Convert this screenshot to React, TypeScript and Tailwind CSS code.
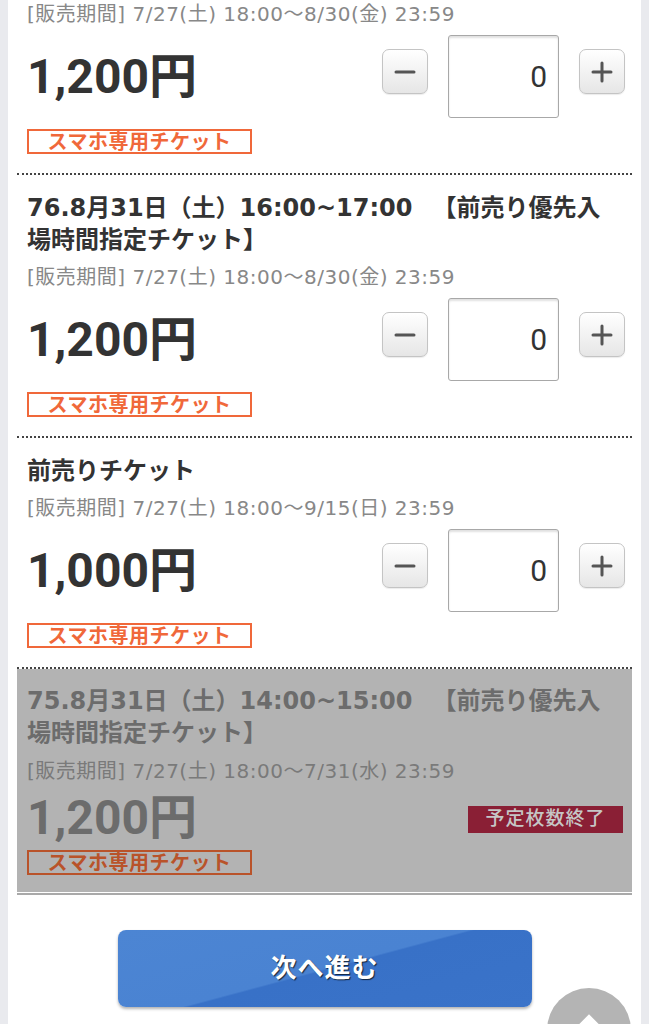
import React from 'react';

type Ticket = {
  title?: string[];
  period: string;
  price: string;
  soldOut?: boolean;
};

// "|" breaks the 　【 pair so the bracket keeps its full width
const tickets: Ticket[] = [
  { period: '[販売期間] 7/27(土) 18:00〜8/30(金) 23:59', price: '1,200円' },
  {
    title: ['76.8月31日（土）16:00~17:00\u3000|【前売り優先入', '場時間指定チケット】'],
    period: '[販売期間] 7/27(土) 18:00〜8/30(金) 23:59',
    price: '1,200円',
  },
  {
    title: ['前売りチケット'],
    period: '[販売期間] 7/27(土) 18:00〜9/15(日) 23:59',
    price: '1,000円',
  },
  {
    title: ['75.8月31日（土）14:00~15:00\u3000|【前売り優先入', '場時間指定チケット】'],
    period: '[販売期間] 7/27(土) 18:00〜7/31(水) 23:59',
    price: '1,200円',
    soldOut: true,
  },
];

const wide = { fontFamily: "'DejaVu Sans', 'Noto Sans CJK JP', sans-serif" };

function StepButton({ kind }: { kind: 'minus' | 'plus' }) {
  return (
    <button className="mt-[14px] flex h-[45px] w-[46px] items-center justify-center rounded-[7px] border border-[#c4c4c4] bg-gradient-to-b from-white to-[#e6e6e6] shadow-[0_1px_1px_rgba(0,0,0,0.08)]">
      <svg width="22" height="22" viewBox="0 0 22 22">
        <path d="M2 11h18" stroke="#555" strokeWidth="3" strokeLinecap="round" />
        {kind === 'plus' && <path d="M11 2v18" stroke="#555" strokeWidth="3" strokeLinecap="round" />}
      </svg>
    </button>
  );
}

function TitleLine({ text }: { text: string }) {
  const parts = text.split('|');
  if (parts.length === 1) return <div>{text}</div>;
  return (
    <div>
      {parts[0]}
      <span className="ml-[-4px] inline-block" />
      {parts[1]}
    </div>
  );
}

function TicketItem({ t, first }: { t: Ticket; first?: boolean }) {
  const dim = t.soldOut;
  return (
    <div
      className={
        dim
          ? 'bg-[#b3b3b3] px-[10px] pt-[16px] pb-[17px]'
          : `border-b-2 border-dotted border-[#444] px-[10px] pb-[19px] ${first ? 'pt-[4px]' : 'pt-[17px]'}`
      }
    >
      {t.title && (
        <div className={`text-[24px] font-bold leading-[32px] ${dim ? 'text-[#6c6c6c]' : 'text-[#333]'}`} style={wide}>
          {t.title.map((l) => (
            <TitleLine key={l} text={l} />
          ))}
        </div>
      )}
      <div
        className={`text-[20px] leading-[20px] tracking-[0.5px] ${t.title ? (dim ? 'mt-[12px]' : 'mt-[11px]') : ''} ${
          dim ? 'text-[#7a7a7a]' : 'text-[#888]'
        }`}
        style={wide}
      >
        {t.period}
      </div>

      {dim ? (
        <div className="mt-[11px] flex h-[52px] items-center justify-between">
          <div className="text-[48px] font-bold leading-none text-[#6c6c6c]">{t.price}</div>
          <div className="mt-[2px] mr-[-1px] flex h-[27px] w-[155px] items-center justify-center bg-[#8a1f35] text-[19px] font-medium tracking-[1px] text-[#c6c6c6]">
            予定枚数終了
          </div>
        </div>
      ) : (
        <div className="mt-[11px] flex items-center justify-between">
          <div className="text-[48px] font-bold leading-none text-[#333]">{t.price}</div>
          <div className="mr-[-3px] flex items-start gap-[20px]">
            <StepButton kind="minus" />
            <div className="flex h-[83px] w-[111px] items-center justify-end rounded-[3px] border border-[#a8a8a8] bg-white pr-[11px] text-[30px] text-[#333] shadow-[inset_0_2px_2px_rgba(0,0,0,0.12)]">
              0
            </div>
            <StepButton kind="plus" />
          </div>
        </div>
      )}

      <div
        className={`${dim ? 'mt-[6px] border-[#b9532a] text-[#b9532a]' : 'mt-[11px] border-[#f0683a] bg-white text-[#f0683a]'} flex h-[25px] w-[225px] items-center justify-center border-2 text-[20px] font-bold tracking-[0.5px]`}
      >
        スマホ専用チケット
      </div>
    </div>
  );
}

export default function App() {
  return (
    <div
      className="h-[1024px] overflow-hidden bg-[#e9eaee] px-[8px]"
      style={{ fontFamily: "Roboto, 'Noto Sans CJK JP', sans-serif" }}
    >
      <div className="h-full bg-white px-[9px]">
        {tickets.map((t, i) => (
          <TicketItem key={i} t={t} first={i === 0} />
        ))}
        <div className="mt-[1px] h-[2px] bg-[#a9a9a9]" />

        <div className="mt-[35px] flex justify-center">
          <button className="h-[77px] w-[414px] rounded-[8px] bg-[linear-gradient(165deg,#4c85d3_0%,#4a83d2_50%,#3871c7_51%,#3a73c9_100%)] text-[26px] font-bold tracking-[1px] text-white shadow-[0_2px_3px_rgba(0,0,0,0.3)] [text-shadow:1px_1px_1px_rgba(0,0,0,0.7)]">
            次へ進む
          </button>
        </div>
      </div>

      {/* scroll to top */}
      <div className="fixed right-[18px] top-[988px] flex h-[84px] w-[84px] justify-center rounded-full bg-[#b4b4b4]">
        <svg width="40" height="30" viewBox="0 0 40 30" className="mt-[22px]">
          <path d="M4 26 L20 10 L36 26" stroke="white" strokeWidth="8" fill="none" strokeLinejoin="miter" />
        </svg>
      </div>
    </div>
  );
}
